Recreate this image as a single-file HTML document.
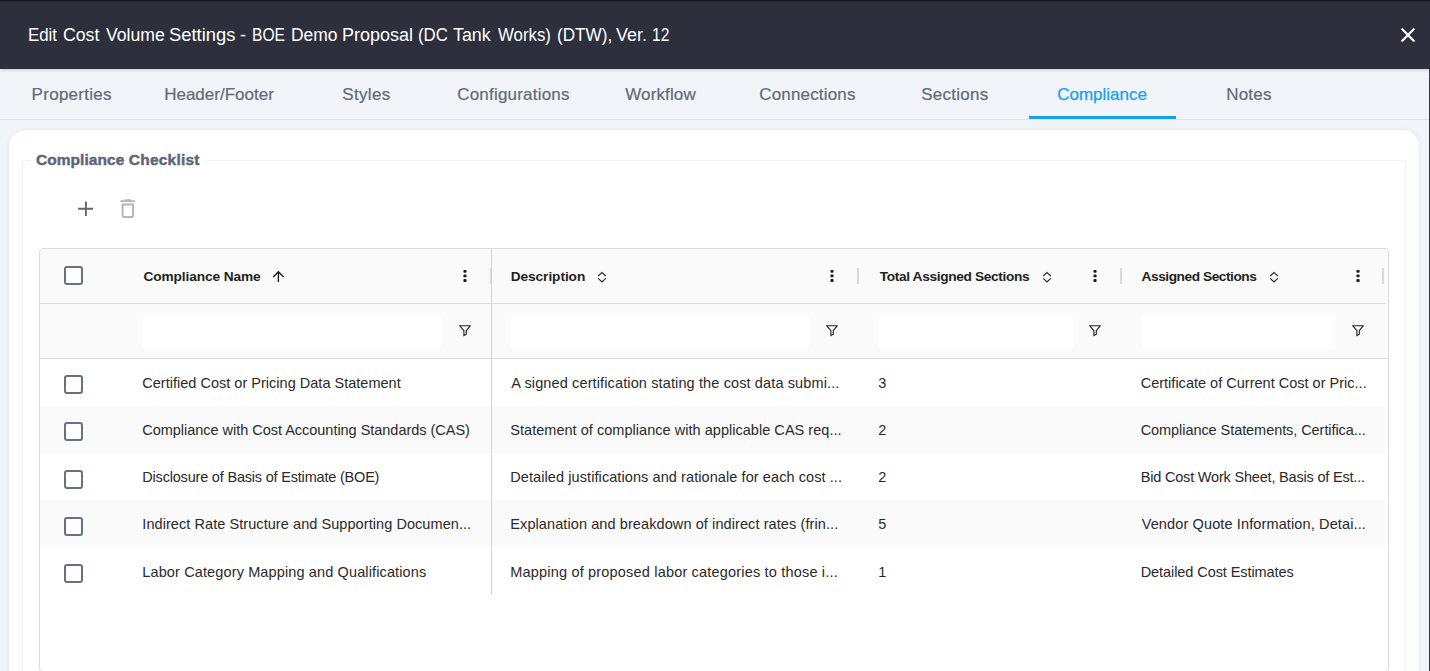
<!DOCTYPE html>
<html lang="en">
<head>
<meta charset="utf-8">
<title>Edit Cost Volume Settings</title>
<style>
*{box-sizing:border-box;margin:0;padding:0}
html,body{width:1430px;height:671px;overflow:hidden;background:#f1f4f9;font-family:"Liberation Sans",sans-serif}
#hdr{position:absolute;left:0;top:0;width:1430px;height:69px;background:#2d303c;box-shadow:0 1px 3px rgba(0,0,0,.18);z-index:2}
#hdr b{position:absolute;left:0;top:0;width:1430px;height:2px;background:linear-gradient(#15161b 0,#15161b 50%,rgba(21,22,27,.35) 50%)}
#hdr .ttl{position:absolute;top:24px;display:block;transform-origin:0 50%;font-size:18px;line-height:22px;color:#fff;white-space:nowrap}
#hdr svg{position:absolute;left:1400.1px;top:27.2px}
#tabs{position:absolute;left:0;top:69px;width:1430px;height:51px;background:#f1f4f9;border-bottom:1px solid #dfe2e8}
#tabs span{position:absolute;top:15px;font-size:17px;line-height:22px;color:#636977;-webkit-text-stroke:0.2px #636977;white-space:nowrap}
#tabs span.on{color:#189ff0;-webkit-text-stroke:0.25px #189ff0}
#tabs i{position:absolute;left:1028.6px;top:47.4px;width:147.5px;height:2.6px;background:#189ff0}
#card{position:absolute;left:9px;top:130px;width:1410px;height:560px;background:#fff;border-radius:16px;box-shadow:0 0 4px rgba(0,0,0,.07)}
#fs{position:absolute;left:22px;top:160px;width:1384px;height:540px;border:1px solid #f0f2f6;border-radius:2px}
.lg{position:absolute;top:150.2px;font-weight:bold;font-size:15.5px;line-height:20px;color:#5e6575;-webkit-text-stroke:0.45px #5e6575;white-space:nowrap}
#lgm{position:absolute;left:30.5px;top:158px;width:174px;height:5px;background:#fff}
#grid{position:absolute;left:39px;top:248px;width:1350px;height:424px;border:1px solid #dcdcdc;border-radius:4px;background:#fff;overflow:hidden}
.hrow{position:absolute;left:0;top:0;width:1348px;height:55px;background:#fafafa}
.hline{position:absolute;left:0;top:54px;width:1345px;height:1px;background:#dcdcdc}
.frow{position:absolute;left:0;top:55px;width:1348px;height:55px;background:#fafafa;border-bottom:1px solid #dcdcdc}
.row{position:absolute;left:0;width:1345px;height:47.2px;background:#fff}
.row.alt{background:#fafafa}
.vline{position:absolute;left:451px;top:0;width:1px;height:345.5px;background:#d4d4d4}
.ht{position:absolute;top:18.4px;font-weight:bold;font-size:13.7px;line-height:20px;color:#1f1f1f;white-space:nowrap}
.ct{position:absolute;top:14.2px;font-size:14.5px;line-height:20px;color:#2a2a2a;white-space:nowrap}
.cb{position:absolute;left:24px;width:19px;height:19px;border:2px solid #687083;border-radius:3px;background:#fff}
.fi{position:absolute;top:9px;height:36px;background:#fff;border-radius:4px}
.hd{position:absolute;top:19px;width:2px;height:16px;background:#dadada}
svg.ic{position:absolute}
</style>
</head>
<body>
<div id="hdr"><b></b><span class="ttl t" style="left:28.10px;transform:scaleX(0.9364)">Edit</span> <span class="ttl t" style="left:63.20px;transform:scaleX(0.9824)">Cost</span> <span class="ttl t" style="left:105.90px;transform:scaleX(0.9787)">Volume</span> <span class="ttl t" style="left:169.10px;transform:scaleX(1.0202)">Settings</span> <span class="ttl t" style="left:240.00px;transform:scaleX(1.0000)">-</span> <span class="ttl t" style="left:251.90px;transform:scaleX(0.8677)">BOE</span> <span class="ttl t" style="left:291.10px;transform:scaleX(0.9701)">Demo</span> <span class="ttl t" style="left:342.10px;transform:scaleX(0.9978)">Proposal</span> <span class="ttl t" style="left:417.70px;transform:scaleX(0.9312)">(DC</span> <span class="ttl t" style="left:453.20px;transform:scaleX(0.9919)">Tank</span> <span class="ttl t" style="left:497.70px;transform:scaleX(0.9336)">Works)</span> <span class="ttl t" style="left:556.70px;transform:scaleX(0.9523)">(DTW),</span> <span class="ttl t" style="left:616.40px;transform:scaleX(1.0007)">Ver.</span> <span class="ttl t" style="left:651.80px;transform:scaleX(0.8664)">12</span>
<svg width="16" height="16" viewBox="0 0 16 16"><path d="M1.6 1.6L14.4 14.4M14.4 1.6L1.6 14.4" stroke="#fff" stroke-width="2.1" fill="none"/></svg></div>
<div id="tabs">
<span class="t" style="left:31.60px;letter-spacing:0.280px">Properties</span>
<span class="t" style="left:164.20px;letter-spacing:0.000px">Header/Footer</span>
<span class="t" style="left:342.20px;letter-spacing:0.360px">Styles</span>
<span class="t" style="left:457.20px;letter-spacing:0.208px">Configurations</span>
<span class="t" style="left:625.20px;letter-spacing:0.129px">Workflow</span>
<span class="t" style="left:759.20px;letter-spacing:0.180px">Connections</span>
<span class="t" style="left:921.20px;letter-spacing:0.257px">Sections</span>
<span class="t on" style="left:1057.20px;letter-spacing:0.000px">Compliance</span>
<span class="t" style="left:1226.20px;letter-spacing:0.225px">Notes</span>
<i></i>
</div>
<div id="card"></div>
<div id="fs"></div>
<div id="lgm"></div><div class="lg t" style="left:35.90px;letter-spacing:0.060px">Compliance</div> <div class="lg t" style="left:128.80px;letter-spacing:0.225px">Checklist</div>
<svg class="ic" style="left:77px;top:200px" width="17" height="17" viewBox="0 0 17 17"><path d="M8.9 1.4V15.9M1.2 8.7H16.1" stroke="#646464" stroke-width="1.9" fill="none"/></svg>
<svg class="ic" style="left:119px;top:198px" width="17" height="21" viewBox="0 0 17 21"><path d="M1.3 3.2H16.1" stroke="#b6b6b6" stroke-width="1.9" fill="none"/><path d="M5.6 2.1H12" stroke="#b6b6b6" stroke-width="1.6" fill="none"/><path d="M3.6 6.6V17.8a1.2 1.2 0 0 0 1.2 1.2H12.9a1.2 1.2 0 0 0 1.2-1.2V6.6Z" stroke="#b6b6b6" stroke-width="2" fill="none"/></svg>
<div id="grid">
<div class="hrow">
<div class="cb" style="top:17px"></div>
<div class="ht t" style="left:103.40px;letter-spacing:-0.103px">Compliance Name</div>
<div class="ht t" style="left:470.70px;letter-spacing:-0.072px">Description</div>
<div class="ht t" style="left:839.70px;letter-spacing:-0.344px">Total Assigned Sections</div>
<div class="ht t" style="left:1101.60px;letter-spacing:-0.450px">Assigned Sections</div>
<svg class="ic" style="left:231px;top:20.7px" width="15" height="14" viewBox="0 0 15 14"><path d="M7.4 12V2.2M2.2 7L7.4 1.8L12.6 7" stroke="#1a1a1a" stroke-width="1.35" fill="none"/></svg><svg class="ic" style="left:556.25px;top:20.5px" width="12" height="14" viewBox="0 0 12 14"><path d="M2.2 6L6 2.5L9.8 6M2.2 8.4L6 11.9L9.8 8.4" stroke="#2a2a2a" stroke-width="1.2" fill="none"/></svg><svg class="ic" style="left:1000.95px;top:20.5px" width="12" height="14" viewBox="0 0 12 14"><path d="M2.2 6L6 2.5L9.8 6M2.2 8.4L6 11.9L9.8 8.4" stroke="#2a2a2a" stroke-width="1.2" fill="none"/></svg><svg class="ic" style="left:1227.95px;top:20.5px" width="12" height="14" viewBox="0 0 12 14"><path d="M2.2 6L6 2.5L9.8 6M2.2 8.4L6 11.9L9.8 8.4" stroke="#2a2a2a" stroke-width="1.2" fill="none"/></svg><svg class="ic" style="left:421.5px;top:20px" width="6" height="14" viewBox="0 0 6 14"><rect x="1.4" y="0.9" width="3.2" height="2.8" rx="1" fill="#1c1c1c"/><rect x="1.4" y="5.5" width="3.2" height="2.8" rx="1" fill="#1c1c1c"/><rect x="1.4" y="10.1" width="3.2" height="2.8" rx="1" fill="#1c1c1c"/></svg><svg class="ic" style="left:789.4px;top:20px" width="6" height="14" viewBox="0 0 6 14"><rect x="1.4" y="0.9" width="3.2" height="2.8" rx="1" fill="#1c1c1c"/><rect x="1.4" y="5.5" width="3.2" height="2.8" rx="1" fill="#1c1c1c"/><rect x="1.4" y="10.1" width="3.2" height="2.8" rx="1" fill="#1c1c1c"/></svg><svg class="ic" style="left:1052px;top:20px" width="6" height="14" viewBox="0 0 6 14"><rect x="1.4" y="0.9" width="3.2" height="2.8" rx="1" fill="#1c1c1c"/><rect x="1.4" y="5.5" width="3.2" height="2.8" rx="1" fill="#1c1c1c"/><rect x="1.4" y="10.1" width="3.2" height="2.8" rx="1" fill="#1c1c1c"/></svg><svg class="ic" style="left:1314.6px;top:20px" width="6" height="14" viewBox="0 0 6 14"><rect x="1.4" y="0.9" width="3.2" height="2.8" rx="1" fill="#1c1c1c"/><rect x="1.4" y="5.5" width="3.2" height="2.8" rx="1" fill="#1c1c1c"/><rect x="1.4" y="10.1" width="3.2" height="2.8" rx="1" fill="#1c1c1c"/></svg>
<div class="hd" style="left:450px"></div><div class="hd" style="left:817px"></div><div class="hd" style="left:1080px"></div><div class="hd" style="left:1342px"></div>
</div>
<div class="hline"></div>
<div class="frow">
<svg class="ic" style="left:417.6px;top:20px" width="14" height="13" viewBox="0 0 14 13"><path d="M1.6 1.7H12.4L8.3 6.6V10.2L5.9 11.6V6.6Z" stroke="#262626" stroke-width="1.15" fill="none" stroke-linejoin="round"/></svg><svg class="ic" style="left:785.2px;top:20px" width="14" height="13" viewBox="0 0 14 13"><path d="M1.6 1.7H12.4L8.3 6.6V10.2L5.9 11.6V6.6Z" stroke="#262626" stroke-width="1.15" fill="none" stroke-linejoin="round"/></svg><svg class="ic" style="left:1048.1px;top:20px" width="14" height="13" viewBox="0 0 14 13"><path d="M1.6 1.7H12.4L8.3 6.6V10.2L5.9 11.6V6.6Z" stroke="#262626" stroke-width="1.15" fill="none" stroke-linejoin="round"/></svg><svg class="ic" style="left:1311px;top:20px" width="14" height="13" viewBox="0 0 14 13"><path d="M1.6 1.7H12.4L8.3 6.6V10.2L5.9 11.6V6.6Z" stroke="#262626" stroke-width="1.15" fill="none" stroke-linejoin="round"/></svg>
<div class="fi" style="left:103px;width:299px"></div>
<div class="fi" style="left:471px;width:299px"></div>
<div class="fi" style="left:839px;width:194px"></div>
<div class="fi" style="left:1101px;width:194px"></div>
</div>
<div class="row" style="top:109.6px"><div class="cb" style="top:16.5px"></div><div class="ct t" style="left:102.30px;letter-spacing:0.014px">Certified Cost or Pricing Data Statement</div> <div class="ct t" style="left:471.30px;letter-spacing:0.125px">A signed certification stating the cost data submi...</div> <div class="ct t" style="left:838.20px;letter-spacing:0.000px">3</div> <div class="ct t" style="left:1100.70px;letter-spacing:0.010px">Certificate of Current Cost or Pric...</div></div>
<div class="row alt" style="top:156.8px"><div class="cb" style="top:16.5px"></div><div class="ct t" style="left:102.30px;letter-spacing:-0.027px">Compliance with Cost Accounting Standards (CAS)</div> <div class="ct t" style="left:470.30px;letter-spacing:0.033px">Statement of compliance with applicable CAS req...</div> <div class="ct t" style="left:838.20px;letter-spacing:0.000px">2</div> <div class="ct t" style="left:1100.70px;letter-spacing:-0.064px">Compliance Statements, Certifica...</div></div>
<div class="row" style="top:204.0px"><div class="cb" style="top:16.5px"></div><div class="ct t" style="left:102.30px;letter-spacing:-0.195px">Disclosure of Basis of Estimate (BOE)</div> <div class="ct t" style="left:470.30px;letter-spacing:0.083px">Detailed justifications and rationale for each cost ...</div> <div class="ct t" style="left:838.20px;letter-spacing:0.000px">2</div> <div class="ct t" style="left:1100.70px;letter-spacing:-0.190px">Bid Cost Work Sheet, Basis of Est...</div></div>
<div class="row alt" style="top:251.2px"><div class="cb" style="top:16.5px"></div><div class="ct t" style="left:102.30px;letter-spacing:0.067px">Indirect Rate Structure and Supporting Documen...</div> <div class="ct t" style="left:470.30px;letter-spacing:0.092px">Explanation and breakdown of indirect rates (frin...</div> <div class="ct t" style="left:838.20px;letter-spacing:0.000px">5</div> <div class="ct t" style="left:1101.70px;letter-spacing:0.125px">Vendor Quote Information, Detai...</div></div>
<div class="row" style="top:298.4px"><div class="cb" style="top:16.5px"></div><div class="ct t" style="left:102.30px;letter-spacing:0.126px">Labor Category Mapping and Qualifications</div> <div class="ct t" style="left:470.30px;letter-spacing:0.184px">Mapping of proposed labor categories to those i...</div> <div class="ct t" style="left:838.20px;letter-spacing:0.000px">1</div> <div class="ct t" style="left:1100.70px;letter-spacing:-0.074px">Detailed Cost Estimates</div></div>
<div class="vline"></div>
</div>
<div style="position:absolute;left:1429px;top:0;width:1px;height:671px;background:linear-gradient(#241f18 0,#241f18 4px,#14506f 4px,#14506f 78px,#34363b 78px)"></div>
</body>
</html>
